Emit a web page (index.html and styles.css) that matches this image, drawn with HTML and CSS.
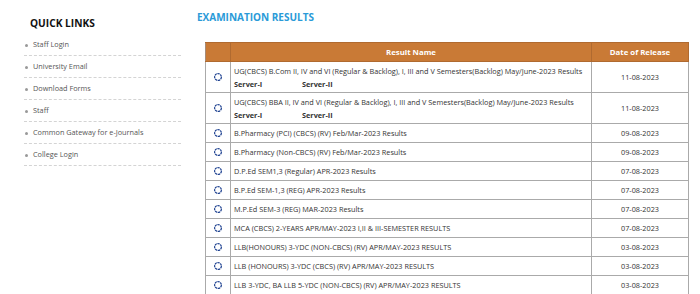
FILE: index.html
```html
<!DOCTYPE html>
<html>
<head>
<meta charset="utf-8">
<link rel="stylesheet" href="styles.css">
</head>
<body>
<div class="page">
  <aside class="sidebar">
    <h2 class="side-title">QUICK LINKS</h2>
    <ul class="links">
      <li>Staff Login</li>
      <li>University Email</li>
      <li>Download Forms</li>
      <li>Staff</li>
      <li>Common Gateway for e-Journals</li>
      <li>College Login</li>
    </ul>
  </aside>
  <main class="main">
    <h1 class="title">EXAMINATION RESULTS</h1>
    <table class="results">
      <thead>
        <tr><th class="c-icon"></th><th class="c-name">Result Name</th><th class="c-date">Date of Release</th></tr>
      </thead>
      <tbody>
        <tr class="tall"><td class="c-icon"><svg viewBox="0 0 10 10" class="ico"><circle cx="5" cy="5" r="3.4"/></svg></td><td class="c-name">UG(CBCS) B.Com II, IV and VI (Regular &amp; Backlog), I, III and V Semesters(Backlog) May/June-2023 Results<div class="servers"><span>Server-I</span><span>Server-II</span></div></td><td class="c-date">11-08-2023</td></tr>
        <tr class="tall"><td class="c-icon"><svg viewBox="0 0 10 10" class="ico"><circle cx="5" cy="5" r="3.4"/></svg></td><td class="c-name">UG(CBCS) BBA II, IV and VI (Regular &amp; Backlog), I, III and V Semesters(Backlog) May/June-2023 Results<div class="servers"><span>Server-I</span><span>Server-II</span></div></td><td class="c-date">11-08-2023</td></tr>
        <tr><td class="c-icon"><svg viewBox="0 0 10 10" class="ico"><circle cx="5" cy="5" r="3.4"/></svg></td><td class="c-name">B.Pharmacy (PCI) (CBCS) (RV) Feb/Mar-2023 Results</td><td class="c-date">09-08-2023</td></tr>
        <tr><td class="c-icon"><svg viewBox="0 0 10 10" class="ico"><circle cx="5" cy="5" r="3.4"/></svg></td><td class="c-name">B.Pharmacy (Non-CBCS) (RV) Feb/Mar-2023 Results</td><td class="c-date">09-08-2023</td></tr>
        <tr><td class="c-icon"><svg viewBox="0 0 10 10" class="ico"><circle cx="5" cy="5" r="3.4"/></svg></td><td class="c-name">D.P.Ed SEM1,3 (Regular) APR-2023 Results</td><td class="c-date">07-08-2023</td></tr>
        <tr><td class="c-icon"><svg viewBox="0 0 10 10" class="ico"><circle cx="5" cy="5" r="3.4"/></svg></td><td class="c-name">B.P.Ed SEM-1,3 (REG) APR-2023 Results</td><td class="c-date">07-08-2023</td></tr>
        <tr><td class="c-icon"><svg viewBox="0 0 10 10" class="ico"><circle cx="5" cy="5" r="3.4"/></svg></td><td class="c-name">M.P.Ed SEM-3 (REG) MAR-2023 Results</td><td class="c-date">07-08-2023</td></tr>
        <tr><td class="c-icon"><svg viewBox="0 0 10 10" class="ico"><circle cx="5" cy="5" r="3.4"/></svg></td><td class="c-name">MCA (CBCS) 2-YEARS APR/MAY-2023 I,II &amp; III-SEMESTER RESULTS</td><td class="c-date">07-08-2023</td></tr>
        <tr><td class="c-icon"><svg viewBox="0 0 10 10" class="ico"><circle cx="5" cy="5" r="3.4"/></svg></td><td class="c-name">LLB(HONOURS) 3-YDC (NON-CBCS) (RV) APR/MAY-2023 RESULTS</td><td class="c-date">03-08-2023</td></tr>
        <tr><td class="c-icon"><svg viewBox="0 0 10 10" class="ico"><circle cx="5" cy="5" r="3.4"/></svg></td><td class="c-name">LLB (HONOURS) 3-YDC (CBCS) (RV) APR/MAY-2023 RESULTS</td><td class="c-date">03-08-2023</td></tr>
        <tr><td class="c-icon"><svg viewBox="0 0 10 10" class="ico"><circle cx="5" cy="5" r="3.4"/></svg></td><td class="c-name">LLB 3-YDC, BA LLB 5-YDC (NON-CBCS) (RV) APR/MAY-2023 RESULTS</td><td class="c-date">03-08-2023</td></tr>
        <tr><td class="c-icon"><svg viewBox="0 0 10 10" class="ico"><circle cx="5" cy="5" r="3.4"/></svg></td><td class="c-name">&nbsp;</td><td class="c-date">&nbsp;</td></tr>
      </tbody>
    </table>
  </main>
</div>
</body>
</html>
```
FILE: styles.css
```css
html, body {
  margin: 0;
  padding: 0;
  background: #fff;
  overflow: hidden;
}
body {
  font-family: "Open Sans", "Noto Sans", sans-serif;
  color: #333;
}
.page {
  display: flex;
  align-items: flex-start;
}
.sidebar {
  width: 157px;
  margin-left: 24px;
  padding-top: 15px;
}
.side-title {
  margin: 0 0 0 6px;
  font-size: 10.2px;
  font-weight: 700;
  color: #111;
  line-height: 16px;
}
.links {
  list-style: none;
  margin: 3px 0 0 0;
  padding: 0;
}
.links li {
  height: 21px;
  line-height: 21px;
  border-bottom: 1px dashed #d4d4d4;
  font-size: 7.3px;
  color: #555;
  padding-left: 9px;
  position: relative;
}
.links li::before {
  content: "";
  position: absolute;
  left: 1px;
  top: 10px;
  width: 3px;
  height: 3px;
  border-radius: 50%;
  background: #999;
}
.main {
  margin-left: 16px;
  padding-top: 9px;
}
.title {
  margin: 0;
  font-size: 10px;
  font-weight: 700;
  color: #2a9ad8;
  line-height: 16px;
}
.results {
  margin: 17px 0 0 8px;
  width: 484px;
  border-collapse: collapse;
  table-layout: fixed;
  font-size: 7.3px;
  color: #333;
}
.results th, .results td {
  border: 1px solid #aaa;
  padding: 0 4px;
}
.results thead th {
  background: #c97a36;
  color: #fff;
  font-weight: 700;
  font-size: 7.8px;
  height: 18px;
  line-height: 10px;
  text-align: center;
  border-color: #b06a30;
  border-left-color: #a58b78;
}
.results .c-icon { width: 24px; padding: 0; text-align: center; }
.results .c-date { width: 96px; text-align: center; padding: 0; }
.results tbody td { height: 18px; line-height: 10px; }
.results tbody tr.tall td { height: 30px; }
.results tbody td.c-name {
  text-align: left;
  padding: 0 3px;
}
.results tbody tr.tall td.c-name {
  vertical-align: top;
  padding-top: 3px;
  height: 27px;
  line-height: 12px;
}
.servers {
  font-weight: 700;
  display: flex;
  margin-top: 1px;
}
.servers span:first-child { width: 68px; }
.ico {
  width: 10px;
  height: 10px;
  display: block;
  margin: 0 auto;
}
.ico circle {
  fill: none;
  stroke: #1b3f8f;
  stroke-width: 1.2;
  stroke-dasharray: 2.4 0.6;
}
```
